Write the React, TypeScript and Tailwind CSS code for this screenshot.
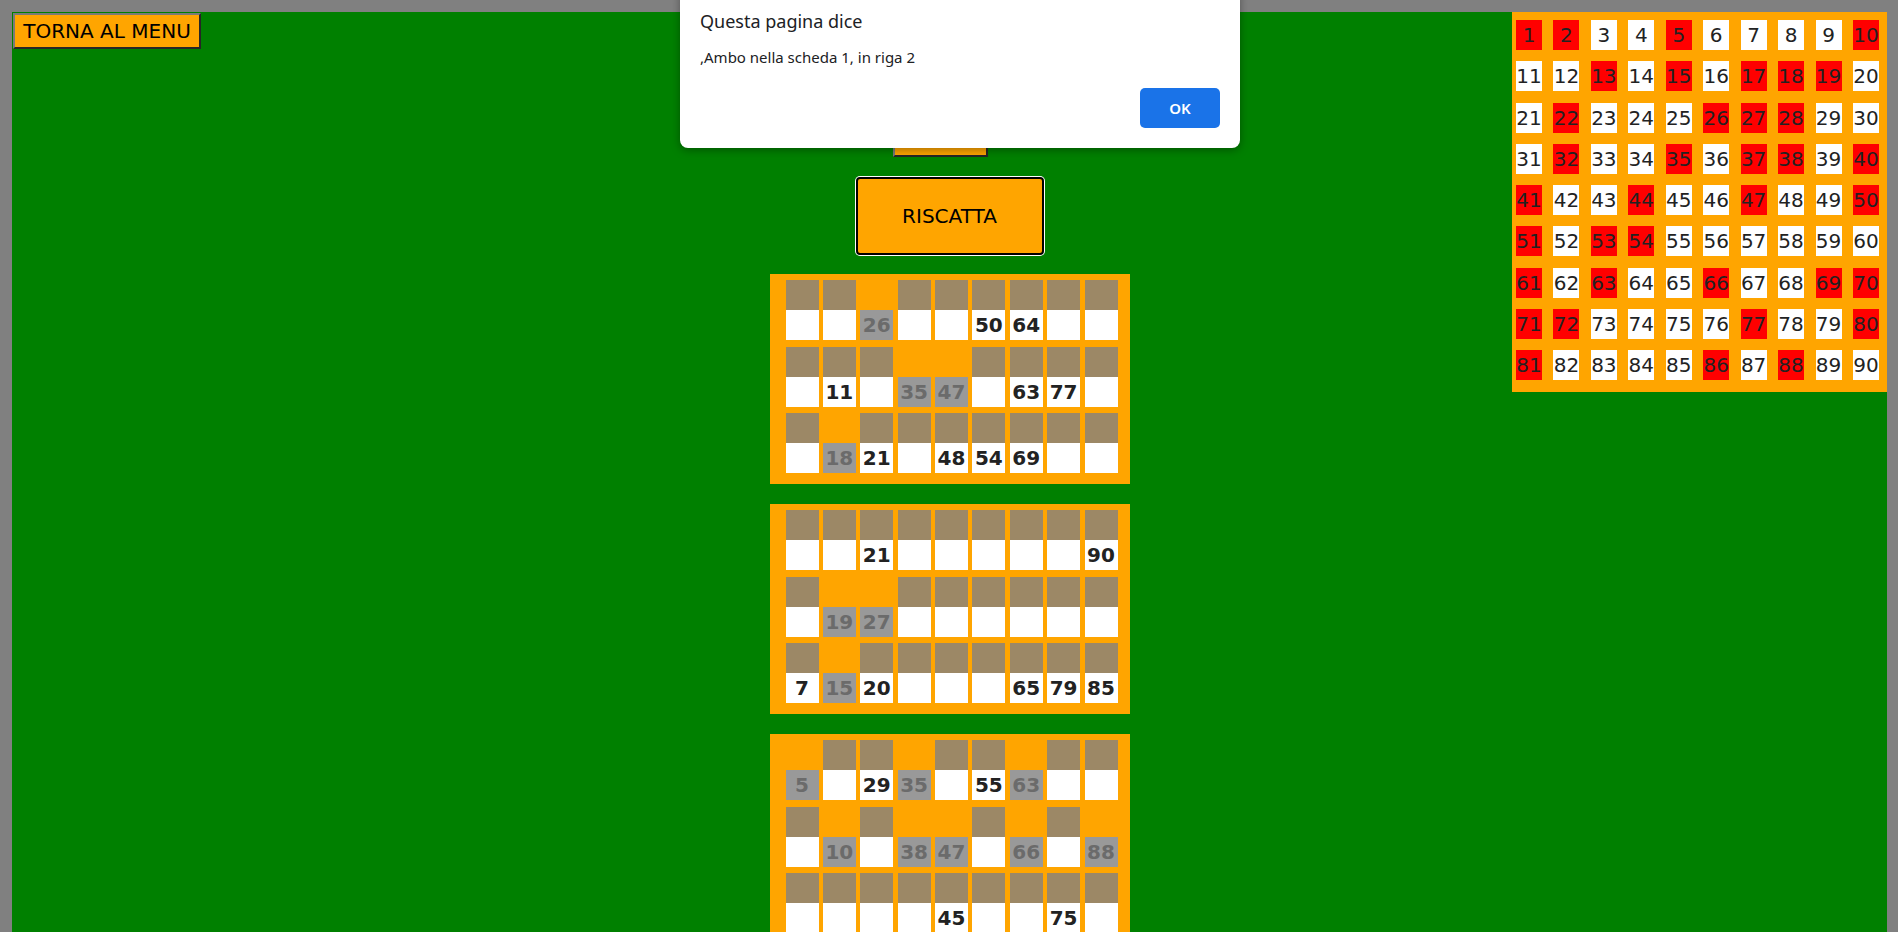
import React from 'react';

// numeri estratti nel tabellone (rossi)
const drawn = new Set([
  1, 2, 5, 10, 13, 15, 17, 18, 19, 22, 26, 27, 28, 32, 35, 37, 38, 40, 41, 44, 47, 50, 51, 53, 54, 61, 63, 66,
  69, 70, 71, 72, 77, 80, 81, 86, 88,
]);

// 0 = vuota, negativo = numero coperto
const tickets: number[][][] = [
  [
    [0, 0, -26, 0, 0, 50, 64, 0, 0],
    [0, 11, 0, -35, -47, 0, 63, 77, 0],
    [0, -18, 21, 0, 48, 54, 69, 0, 0],
  ],
  [
    [0, 0, 21, 0, 0, 0, 0, 0, 90],
    [0, -19, -27, 0, 0, 0, 0, 0, 0],
    [7, -15, 20, 0, 0, 0, 65, 79, 85],
  ],
  [
    [-5, 0, 29, -35, 0, 55, -63, 0, 0],
    [0, -10, 0, -38, -47, 0, -66, 0, -88],
    [0, 0, 0, 0, 45, 0, 0, 75, 0],
  ],
];

const btn =
  "bg-[#ffa500] text-black text-[20px] leading-none border-2 border-t-[#7a7a7a] border-l-[#7a7a7a] border-b-[#262626] border-r-[#262626] flex items-center justify-center";

function Ticket({ rows }: { rows: number[][] }) {
  return (
    <div className="w-[360px] h-[210px] bg-[#ffa500] pl-[16px] pr-[12px] pt-[6px] flex flex-col gap-y-[6.5px]">
      {rows.map((row, r) => (
        <div key={r} className="flex justify-between">
          {row.map((v, c) => {
            const marked = v < 0;
            return (
              <div key={c} className="w-[33px] flex flex-col">
                <div className={`h-[30px] ${marked ? 'bg-transparent' : 'bg-[#9c8866]'}`} />
                <div
                  className={`h-[30px] leading-[30px] text-center font-bold text-[20px] ${
                    marked ? 'bg-[#999999] text-[#6b6b6b]' : 'bg-white text-[#222]'
                  }`}
                >
                  {v !== 0 ? Math.abs(v) : ''}
                </div>
              </div>
            );
          })}
        </div>
      ))}
    </div>
  );
}

export default function App() {
  const nums = Array.from({ length: 90 }, (_, i) => i + 1);

  return (
    <div className="relative min-h-screen bg-[#808080] pt-[12px] pl-[12px] pr-[11px] font-['DejaVu_Sans',Verdana,sans-serif] overflow-hidden">
      <div className="bg-[#008000] min-h-[960px] grid grid-cols-[375px_1fr_375px] items-start">
        {/* sinistra */}
        <div className="p-px">
          <button className={`${btn} w-[188px] h-[36px]`}>TORNA AL MENU</button>
        </div>

        {/* centro */}
        <div className="flex flex-col items-center pb-5">
          <button className={`${btn} w-[95px] h-[36px] mt-[109px] mr-[18px]`}>ESTRAI</button>
          <button className="mt-[20px] w-[188px] h-[78px] bg-[#ffa500] border-2 border-black rounded-[4px] shadow-[0_0_0_1px_#fff] text-[20px] text-black">
            RISCATTA
          </button>
          <div className="mt-[19px] flex flex-col gap-[20px]">
            {tickets.map((t, i) => (
              <Ticket key={i} rows={t} />
            ))}
          </div>
        </div>

        {/* tabellone */}
        <div className="h-[380px] bg-[#ffa500] pl-[4px] pr-[8px] pt-[8px] pb-[12px] grid grid-cols-[repeat(10,26px)] justify-between content-between">
          {nums.map((n) => (
            <div
              key={n}
              className={`h-[30px] leading-[30px] text-center text-[20px] text-[#222] whitespace-nowrap ${
                drawn.has(n) ? 'bg-[#ff0000]' : 'bg-white'
              }`}
            >
              {n}
            </div>
          ))}
        </div>
      </div>

      {/* alert del browser */}
      <div className="absolute left-[680px] top-[-12px] w-[560px] h-[160px] bg-white rounded-[8px] shadow-[0_2px_10px_rgba(0,0,0,0.35)] pt-[21px] px-[20px] font-['Noto_Sans','Open_Sans',sans-serif] text-[#202124]">
        <div className="text-[18px] leading-[24px]">Questa pagina dice</div>
        <div className="mt-[14px] text-[15px] leading-[20px]">,Ambo nella scheda 1, in riga 2</div>
        <div className="mt-[21px] flex justify-end">
          <button className="w-[80px] h-[40px] rounded-[5px] bg-[#1a73e8] text-white text-[15px] font-semibold">OK</button>
        </div>
      </div>
    </div>
  );
}
